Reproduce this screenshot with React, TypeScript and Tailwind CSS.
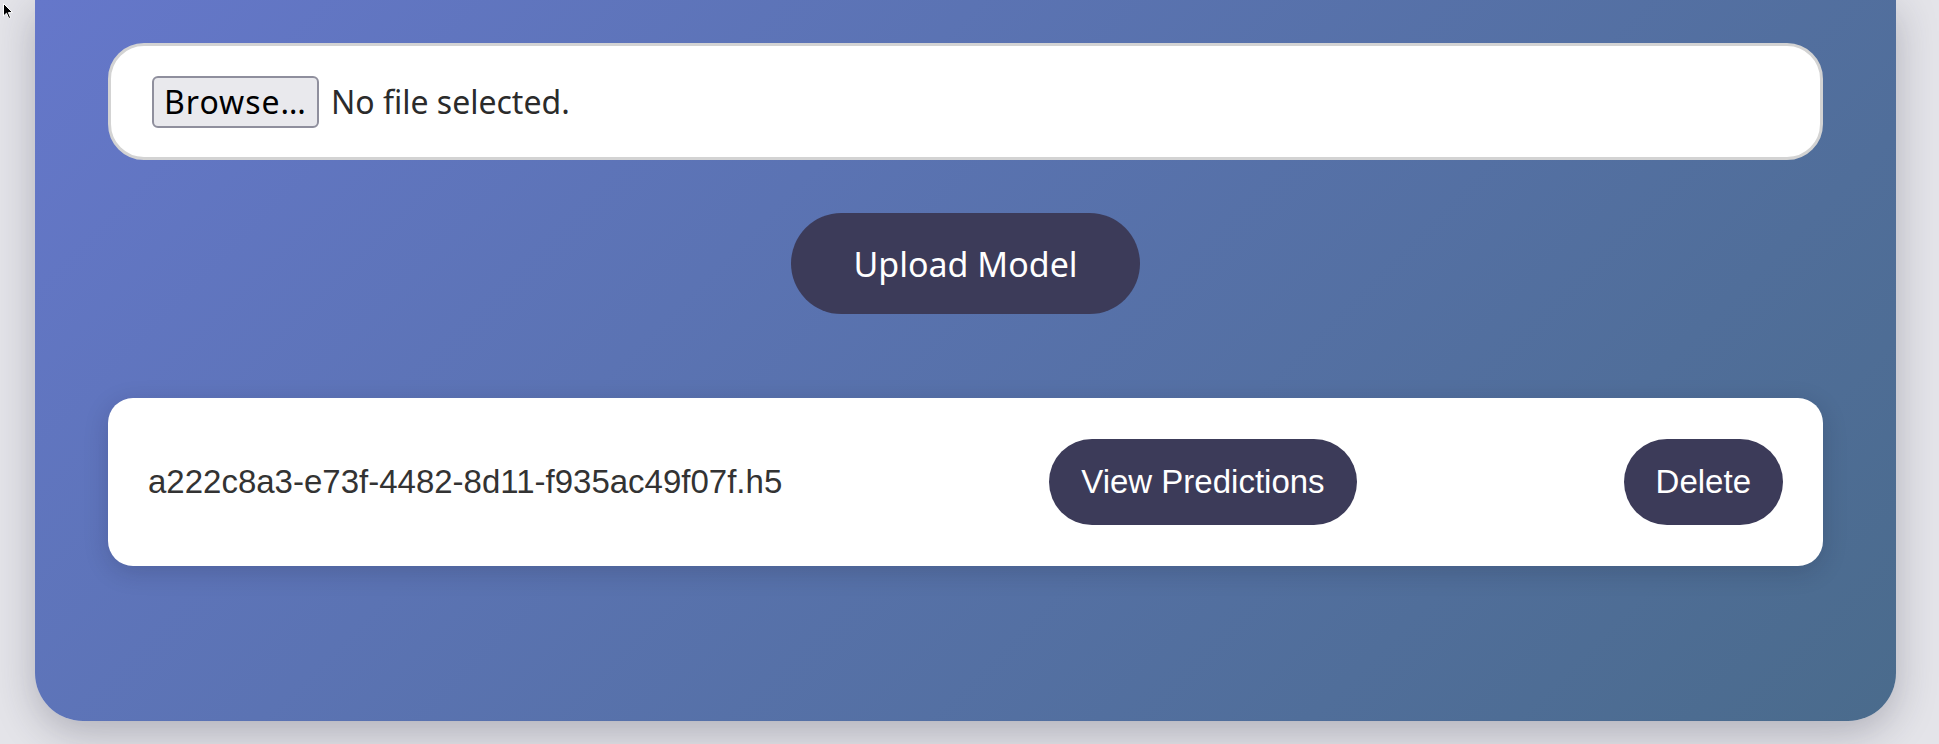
const files = [
  { id: "a222c8a3-e73f-4482-8d11-f935ac49f07f", name: "a222c8a3-e73f-4482-8d11-f935ac49f07f.h5" },
];

const uiFont = { fontFamily: '"Noto Sans", "Open Sans", sans-serif' };

export default function App() {
  return (
    <div className="relative h-[744px] w-full overflow-hidden bg-[#e4e4e9]">
      {/* mouse pointer left over from the screenshot */}
      <svg
        className="absolute left-[3px] top-[3px]"
        width="11"
        height="17"
        viewBox="0 0 11 17"
      >
        <path d="M0.5 0.5 L0.5 13 L3.5 10.2 L5.8 15.5 L7.6 14.7 L5.4 9.6 L9.6 9.6 Z" fill="#000" stroke="#fff" strokeWidth="1" />
      </svg>

      <div className="ml-[35px] w-[1861px] rounded-b-[48px] bg-linear-135 from-[#6577ca] to-[#4a6b8c] px-[73px] pb-[155px] pt-[43px] shadow-[0_12px_40px_rgba(40,40,60,0.28)]">
        {/* file picker */}
        <div
          className="flex h-[117px] items-center gap-[12px] rounded-[36px] border-[3px] border-[#d3d3d3] bg-white pl-[41px]"
          style={uiFont}
        >
          <span className="flex h-[52px] items-center rounded-[6px] border-2 border-[#8f8f9d] bg-[#e9e9ed] px-[10px] text-[32px] leading-none tracking-[1px] text-black">
            Browse…
          </span>
          <span className="text-[32px] text-[#2b2b2b]">No file selected.</span>
        </div>

        <div className="mt-[53px] flex justify-center">
          <button
            className="h-[101px] rounded-full bg-[#3c3b59] px-[62px] text-[34px] leading-none text-white"
            style={uiFont}
          >
            Upload Model
          </button>
        </div>

        <div className="mt-[84px] flex flex-col gap-6">
          {files.map((f) => (
            <div
              key={f.id}
              className="flex items-center justify-between rounded-[25px] bg-white px-[40px] py-[41px] font-['Liberation_Sans',Arial,sans-serif] text-[33px] leading-[1.15] shadow-[0_6px_24px_rgba(20,20,40,0.18)]"
            >
              <span className="text-[#333]">{f.name}</span>
              <button className="rounded-full bg-[#3c3b59] px-8 py-6 text-white">View Predictions</button>
              <button className="rounded-full bg-[#3c3b59] px-8 py-6 text-white">Delete</button>
            </div>
          ))}
        </div>
      </div>
    </div>
  );
}
